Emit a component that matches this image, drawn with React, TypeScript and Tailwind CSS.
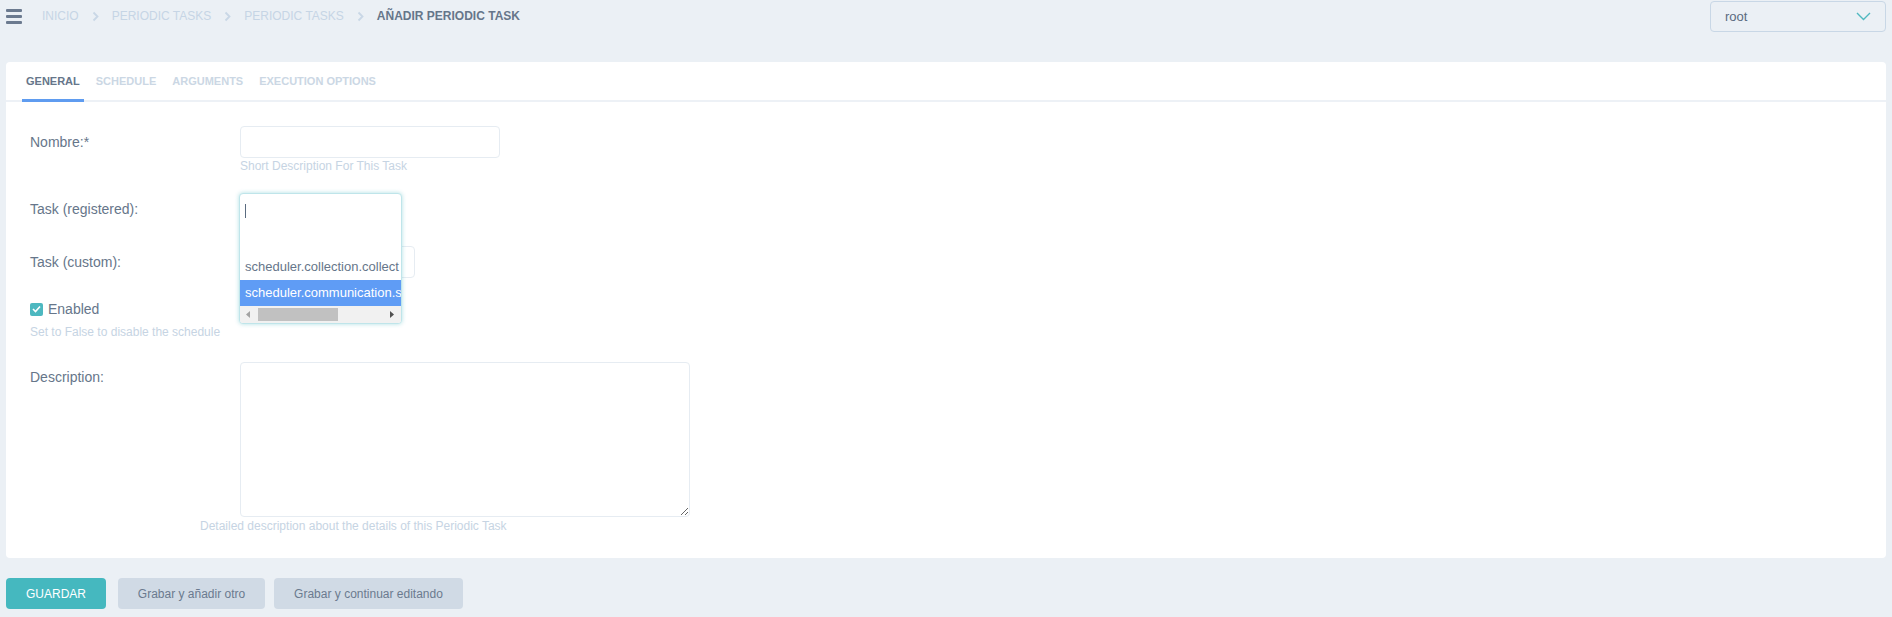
import React from 'react';

const crumbs = ['Inicio', 'Periodic tasks', 'Periodic tasks'];
const tabs = ['General', 'Schedule', 'Arguments', 'Execution options'];

const Chevron: React.FC = () => (
  <svg width="7" height="11" viewBox="0 0 7 11" fill="none" className="mx-[13px]">
    <path d="M1.5 1.5L5.5 5.5L1.5 9.5" stroke="#c9d7e6" strokeWidth="1.8" />
  </svg>
);

const TaskAutocomplete: React.FC = () => (
  <div className="absolute left-[-1px] top-0 z-10 flex h-[131px] w-[163px] flex-col overflow-hidden rounded-[4px] border border-[#bfe5ea] bg-white shadow-[0_0_4px_rgba(77,184,192,0.45)]">
    <div className="relative h-[59px] shrink-0">
      <div className="absolute left-[5px] top-[10px] h-[14px] w-px bg-[#5a6b80]" />
    </div>
    <div className="h-[27px] shrink-0 overflow-hidden whitespace-nowrap pl-[5px] text-[13px] leading-[27px] text-[#66768a]">
      scheduler.collection.collect
    </div>
    <div className="h-[26px] shrink-0 overflow-hidden whitespace-nowrap bg-[#5f9cf5] pl-[5px] text-[13px] leading-[26px] text-white">
      scheduler.communication.s
    </div>
    <div className="flex h-[17px] shrink-0 items-center bg-[#f1f1f1]">
      <svg width="18" height="17" viewBox="0 0 18 17" className="shrink-0">
        <path d="M10 5L6 8.5L10 12Z" fill="#a3a3a3" />
      </svg>
      <div className="h-[13px] w-[80px] bg-[#c1c1c1]" />
      <div className="flex-1" />
      <svg width="18" height="17" viewBox="0 0 18 17" className="shrink-0">
        <path d="M7 5L11 8.5L7 12Z" fill="#505050" />
      </svg>
    </div>
  </div>
);

const App: React.FC = () => {
  return (
    <div className="min-h-screen bg-[#ebf0f5] font-['Liberation_Sans',Arial,sans-serif] text-[#66768a]">
      <header className="flex h-[62px] items-start justify-between px-[6px] pt-px">
        <div className="flex items-center pt-[6px]">
          <div className="flex w-4 flex-col gap-[3px]">
            <div className="h-[3px] rounded-[1px] bg-[#6b7a8f]" />
            <div className="h-[3px] rounded-[1px] bg-[#6b7a8f]" />
            <div className="h-[3px] rounded-[1px] bg-[#6b7a8f]" />
          </div>
          <nav className="ml-[20px] flex items-center text-[12px] uppercase">
            {crumbs.map((c, i) => (
              <React.Fragment key={i}>
                <span className="text-[#c6d5e5]">{c}</span>
                <Chevron />
              </React.Fragment>
            ))}
            <span className="font-bold text-[#66768a]">Añadir periodic task</span>
          </nav>
        </div>
        <div className="flex h-[31px] w-[176px] items-center justify-between rounded-[4px] border border-[#c8d7e6] pl-[14px] pr-[14px] text-[13px] text-[#5a6b80]">
          <span>root</span>
          <svg width="15" height="9" viewBox="0 0 15 9" fill="none">
            <path d="M1 1L7.5 7.5L14 1" stroke="#4fb8c0" strokeWidth="1.4" />
          </svg>
        </div>
      </header>

      <main className="mx-[6px] rounded-[4px] bg-white">
        <div className="flex gap-[8px] border-b-2 border-[#edf1f6] px-4">
          {tabs.map((t, i) => (
            <div
              key={t}
              className={
                i === 0
                  ? '-mb-[2px] flex h-[40px] items-center border-b-[3px] border-[#5f9cf0] px-1 pt-[1px] text-[11px] font-bold uppercase text-[#66768a]'
                  : '-mb-[2px] flex h-[40px] items-center border-b-[3px] border-transparent px-1 pt-[1px] text-[11px] font-bold uppercase text-[#cbd7e4]'
              }
            >
              {t}
            </div>
          ))}
        </div>

        <form className="flex flex-col px-6 pb-[25px] pt-[24px] text-[14px]">
          <div className="flex items-center">
            <label className="w-[210px]">Nombre:*</label>
            <input type="text" className="h-[32px] w-[260px] rounded-[4px] border border-[#e6ecf2] outline-none" />
          </div>
          <div className="ml-[210px] mt-px text-[12px] leading-[14px] text-[#c6d4e3]">Short Description For This Task</div>

          <div className="mt-[20px] flex items-center">
            <label className="w-[210px]">Task (registered):</label>
            <div className="relative h-[32px] w-[162px]">
              <TaskAutocomplete />
            </div>
          </div>

          <div className="mt-[21px] flex items-center">
            <label className="w-[210px]">Task (custom):</label>
            <input type="text" className="h-[32px] w-[175px] rounded-[4px] border border-[#e6ecf2] outline-none" />
          </div>

          <div className="mt-[21px] flex h-[20px] items-center">
            <span className="flex h-[13px] w-[13px] items-center justify-center rounded-[2px] bg-[#4db8c0]">
              <svg width="9" height="8" viewBox="0 0 9 8" fill="none">
                <path d="M1 4L3.5 6.5L8 1.5" stroke="white" strokeWidth="1.6" />
              </svg>
            </span>
            <span className="ml-[5px]">Enabled</span>
          </div>
          <div className="mt-[6px] text-[12px] leading-[14px] text-[#c6d4e3]">Set to False to disable the schedule</div>

          <div className="mt-[23px] flex items-start">
            <label className="flex h-[30px] w-[210px] items-center">Description:</label>
            <textarea className="h-[155px] w-[450px] rounded-[4px] border border-[#e6ecf2] outline-none" />
          </div>
          <div className="mt-[2px] pl-[170px] text-[12px] leading-[14px] text-[#c6d4e3]">
            Detailed description about the details of this Periodic Task
          </div>
        </form>
      </main>

      <div className="flex px-[6px] pt-[20px] text-[12px]">
        <button className="h-[31px] w-[100px] rounded-[4px] bg-[#45b8bf] uppercase text-white">Guardar</button>
        <button className="ml-[12px] h-[31px] w-[147px] rounded-[4px] bg-[#d0dae5] text-[#6b7a8f]">Grabar y añadir otro</button>
        <button className="ml-[9px] h-[31px] w-[189px] rounded-[4px] bg-[#d0dae5] text-[#6b7a8f]">Grabar y continuar editando</button>
      </div>
    </div>
  );
};

export default App;
